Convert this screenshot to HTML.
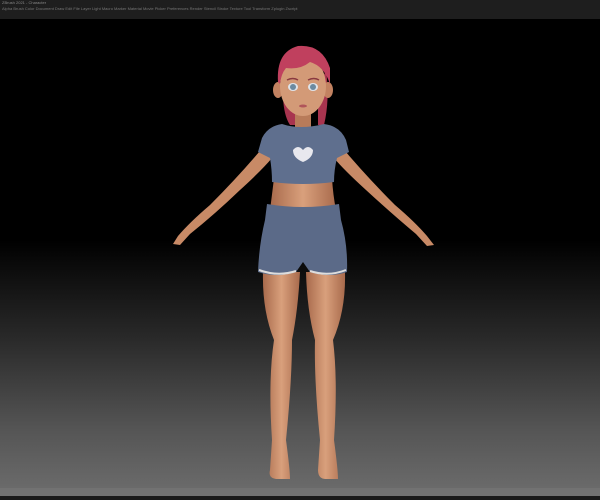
<!DOCTYPE html>
<html><head><style>
html,body{margin:0;padding:0;width:600px;height:500px;overflow:hidden;font-family:"Liberation Sans",sans-serif}
#bg{position:absolute;left:0;top:0;width:600px;height:500px;background:linear-gradient(#000 0px,#000 240px,#2a2a2a 340px,#555 430px,#6a6a6a 488px)}
#top{position:absolute;left:0;top:0;width:600px;height:19px;background:#1e1e1e;color:#888;font-size:4px;line-height:6px}
#bot1{position:absolute;left:0;top:488px;width:600px;height:8px;background:#727272}
#bot2{position:absolute;left:0;top:496px;width:600px;height:4px;background:#1a1a1a}
svg{position:absolute;left:0;top:0}
</style></head><body>
<div id="bg"></div>
<div id="top"><div style="padding-left:2px">ZBrush 2021 - Character</div><div style="padding-left:2px;color:#777">Alpha Brush Color Document Draw Edit File Layer Light Macro Marker Material Movie Picker Preferences Render Stencil Stroke Texture Tool Transform Zplugin Zscript</div></div>
<div id="bot1"></div><div id="bot2"></div>
<svg width="600" height="500" viewBox="0 0 600 500">
<defs>
<linearGradient id="sk" x1="0" x2="1"><stop offset="0" stop-color="#a86a4c"/><stop offset=".5" stop-color="#d9a07c"/><stop offset="1" stop-color="#a86a4c"/></linearGradient>
</defs>
<!-- hair back -->
<path d="M284 70 Q280 110 290 125 L296 125 L296 90 Z M318 90 L318 125 L324 125 Q330 100 326 70 Z" fill="#a8344f"/>
<!-- arms -->
<path d="M265 145 Q240 175 210 205 Q190 222 178 236 L173 244 L180 245 L190 234 Q215 214 240 190 Q262 170 272 158 Z" fill="#c88a66"/>
<path d="M340 145 Q365 175 395 205 Q415 222 427 236 L434 245 L427 246 L416 234 Q392 214 366 190 Q344 170 334 158 Z" fill="#c88a66"/>
<!-- legs -->
<path d="M263 272 Q262 310 274 340 Q268 380 272 440 L270 470 Q268 478 276 479 L290 479 Q290 470 286 440 Q292 380 292 340 Q298 310 300 272 Z" fill="url(#sk)"/>
<path d="M306 272 Q307 310 315 340 Q314 380 320 440 L318 470 Q318 479 326 479 L338 479 Q338 470 334 440 Q338 380 333 340 Q346 310 345 272 Z" fill="url(#sk)"/>
<!-- neck & torso -->
<rect x="295" y="108" width="16" height="22" fill="#b87b5a"/>
<path d="M274 178 Q272 195 270 210 L336 210 Q333 195 332 178 Z" fill="url(#sk)"/>
<!-- shirt -->
<path d="M282 124 Q300 130 324 124 Q340 126 346 140 L349 152 L337 158 Q334 170 334 182 Q303 186 272 182 Q272 170 270 158 L258 152 L262 138 Q268 126 282 124 Z" fill="#5f6f8e"/>
<path d="M293 150 q5 -6 10 0 q5 -6 10 0 q0 8 -10 12 q-10 -4 -10 -12z" fill="#e8e8ee"/>
<!-- shorts -->
<path d="M267 204 Q303 210 339 204 L341 220 Q348 245 347 272 Q330 278 310 272 L303 262 L296 272 Q276 278 258 272 Q259 245 265 220 Z" fill="#5b6a88"/>
<path d="M259 270 Q278 277 296 271 M310 271 Q328 277 346 270" stroke="#ddd" stroke-width="2" fill="none"/>
<!-- ears & face -->
<ellipse cx="278" cy="90" rx="5" ry="8" fill="#c28261"/>
<ellipse cx="328" cy="90" rx="5" ry="8" fill="#c28261"/>
<ellipse cx="303" cy="86" rx="23" ry="30" fill="#d39a77"/>
<ellipse cx="293" cy="87" rx="5" ry="4" fill="#dfe4ea"/><circle cx="293" cy="87" r="3" fill="#6c8aa0"/>
<ellipse cx="313" cy="87" rx="5" ry="4" fill="#dfe4ea"/><circle cx="313" cy="87" r="3" fill="#6c8aa0"/>
<path d="M287 80 q6 -3 11 0 M308 80 q6 -3 11 0" stroke="#8a3a40" stroke-width="1.5" fill="none"/>
<ellipse cx="303" cy="106" rx="4" ry="1.5" fill="#b0555a"/>
<!-- hair top -->
<path d="M278 82 Q276 52 298 46 Q322 44 330 68 L330 84 Q324 66 310 62 Q300 70 286 68 Q281 74 280 84 Z" fill="#c0405e"/>
</svg>
</body></html>
